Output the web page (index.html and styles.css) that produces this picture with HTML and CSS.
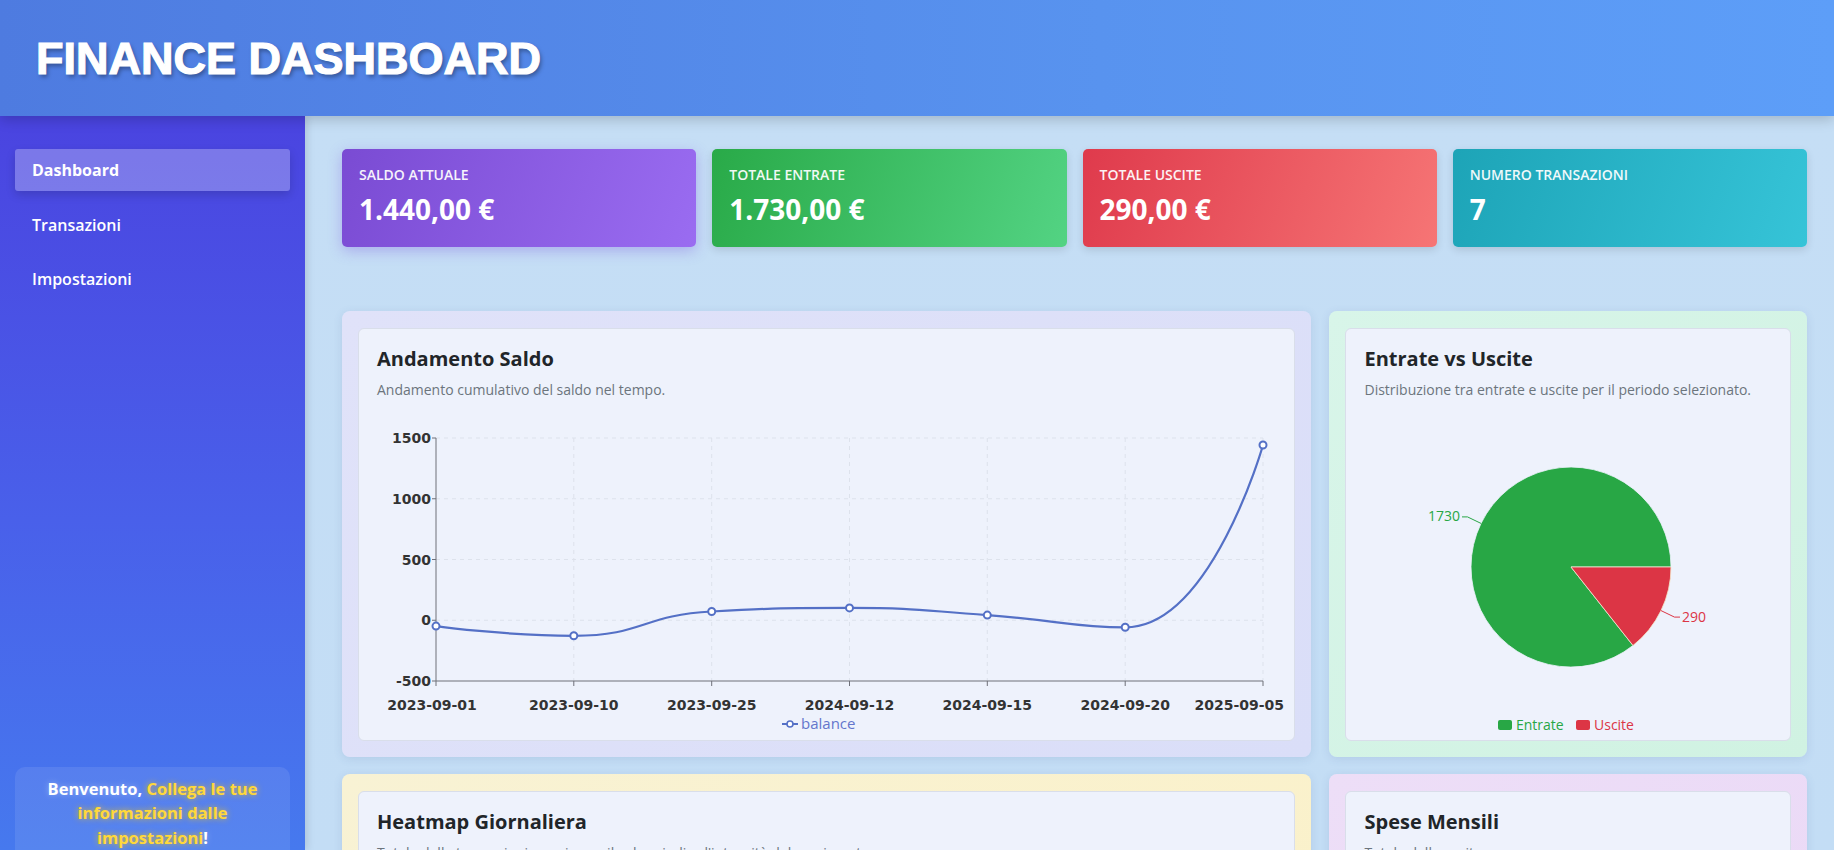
FILE: index.html
```
<!DOCTYPE html>
<html lang="it">
<head>
<meta charset="utf-8">
<title>Finance Dashboard</title>
<link rel="stylesheet" href="styles.css">
</head>
<body>
<header class="topbar">
  <h1 class="brand">FINANCE DASHBOARD</h1>
</header>
<div class="layout">
  <aside class="sidebar">
    <nav class="nav">
      <a class="nav-item active" href="#">Dashboard</a>
      <a class="nav-item" href="#">Transazioni</a>
      <a class="nav-item" href="#">Impostazioni</a>
    </nav>
    <div class="welcome">Benvenuto, <span class="hl">Collega le tue informazioni dalle impostazioni</span>!</div>
  </aside>
  <main class="main">
    <section class="stats">
      <div class="stat stat-purple">
        <div class="stat-label">Saldo attuale</div>
        <div class="stat-value">1.440,00 €</div>
      </div>
      <div class="stat stat-green">
        <div class="stat-label">Totale entrate</div>
        <div class="stat-value">1.730,00 €</div>
      </div>
      <div class="stat stat-red">
        <div class="stat-label">Totale uscite</div>
        <div class="stat-value">290,00 €</div>
      </div>
      <div class="stat stat-teal">
        <div class="stat-label">Numero transazioni</div>
        <div class="stat-value">7</div>
      </div>
    </section>

    <section class="charts">
      <div class="panel panel-lavender">
        <div class="chart-card">
          <h2 class="chart-title">Andamento Saldo</h2>
          <p class="chart-sub">Andamento cumulativo del saldo nel tempo.</p>
          <svg class="chart-svg" width="898" height="330" viewBox="0 0 898 330">
            <g class="grid">
              <line x1="59" y1="34" x2="886" y2="34"/>
              <line x1="59" y1="94.75" x2="886" y2="94.75"/>
              <line x1="59" y1="155.5" x2="886" y2="155.5"/>
              <line x1="59" y1="216.25" x2="886" y2="216.25"/>
              <line x1="196.8" y1="34" x2="196.8" y2="277"/>
              <line x1="334.7" y1="34" x2="334.7" y2="277"/>
              <line x1="472.5" y1="34" x2="472.5" y2="277"/>
              <line x1="610.3" y1="34" x2="610.3" y2="277"/>
              <line x1="748.2" y1="34" x2="748.2" y2="277"/>
              <line x1="886" y1="34" x2="886" y2="277"/>
            </g>
            <g class="axis">
              <line x1="59" y1="34" x2="59" y2="277"/>
              <line x1="59" y1="277" x2="886" y2="277"/>
              <line x1="55" y1="34" x2="59" y2="34"/>
              <line x1="55" y1="94.75" x2="59" y2="94.75"/>
              <line x1="55" y1="155.5" x2="59" y2="155.5"/>
              <line x1="55" y1="216.25" x2="59" y2="216.25"/>
              <line x1="55" y1="277" x2="59" y2="277"/>
              <line x1="59" y1="277" x2="59" y2="282"/>
              <line x1="196.8" y1="277" x2="196.8" y2="282"/>
              <line x1="334.7" y1="277" x2="334.7" y2="282"/>
              <line x1="472.5" y1="277" x2="472.5" y2="282"/>
              <line x1="610.3" y1="277" x2="610.3" y2="282"/>
              <line x1="748.2" y1="277" x2="748.2" y2="282"/>
              <line x1="886" y1="277" x2="886" y2="282"/>
            </g>
            <g class="axis-label y-labels">
              <text x="54" y="39">1500</text>
              <text x="54" y="100">1000</text>
              <text x="54" y="160.5">500</text>
              <text x="54" y="221">0</text>
              <text x="54" y="282">-500</text>
            </g>
            <g class="axis-label x-labels">
              <text x="55" y="306">2023-09-01</text>
              <text x="196.8" y="306">2023-09-10</text>
              <text x="334.7" y="306">2023-09-25</text>
              <text x="472.5" y="306">2024-09-12</text>
              <text x="610.3" y="306">2024-09-15</text>
              <text x="748.2" y="306">2024-09-20</text>
              <text class="x-last" x="907" y="306">2025-09-05</text>
            </g>
            <path class="series" d="M59,222.1 C59,222.1 128.3,231.8 196.8,231.8 C266.2,231.8 265.2,211.2 334.7,207.5 C403.1,203.9 403.7,203.9 472.5,203.9 C541.4,203.9 541.5,206.3 610.3,211.1 C679.3,216 696.2,223.3 748.2,223.3 C834.1,223.3 886,41 886,41"/>
            <g class="dots">
              <circle cx="59" cy="222.1" r="3.5"/>
              <circle cx="196.8" cy="231.8" r="3.5"/>
              <circle cx="334.7" cy="207.5" r="3.5"/>
              <circle cx="472.5" cy="203.9" r="3.5"/>
              <circle cx="610.3" cy="211.1" r="3.5"/>
              <circle cx="748.2" cy="223.3" r="3.5"/>
              <circle cx="886" cy="41" r="3.5"/>
            </g>
            <g class="legend">
              <line class="legend-line" x1="405" y1="320" x2="421" y2="320"/>
              <circle class="legend-dot" cx="413" cy="320" r="3"/>
              <text class="legend-text" x="424" y="325">balance</text>
            </g>
          </svg>
        </div>
      </div>

      <div class="panel panel-mint">
        <div class="chart-card">
          <h2 class="chart-title">Entrate vs Uscite</h2>
          <p class="chart-sub">Distribuzione tra entrate e uscite per il periodo selezionato.</p>
          <svg class="chart-svg" width="407" height="330" viewBox="0 0 407 330">
            <path class="slice-green" d="M207,163 L269,241.5 A100,100 0 1 1 307,163 Z"/>
            <path class="slice-red" d="M207,163 L307,163 A100,100 0 0 1 269,241.5 Z"/>
            <polyline class="leader-green" points="117,119.4 103.5,112.9 98,112.9"/>
            <text class="pie-label label-green" x="96" y="117" text-anchor="end">1730</text>
            <polyline class="leader-red" points="297,206.6 310.5,213.1 316,213.1"/>
            <text class="pie-label label-red" x="318" y="218">290</text>
            <rect class="sw-green" x="134" y="316" width="14" height="10" rx="2"/>
            <text class="pie-legend label-green" x="152" y="326">Entrate</text>
            <rect class="sw-red" x="212" y="316" width="14" height="10" rx="2"/>
            <text class="pie-legend label-red" x="230" y="326">Uscite</text>
          </svg>
        </div>
      </div>

      <div class="panel panel-yellow">
        <div class="chart-card">
          <h2 class="chart-title">Heatmap Giornaliera</h2>
          <p class="chart-sub">Totale delle transazioni per giorno: il colore indica l'intensità del movimento.</p>
        </div>
      </div>

      <div class="panel panel-pink">
        <div class="chart-card">
          <h2 class="chart-title">Spese Mensili</h2>
          <p class="chart-sub">Totale delle uscite per mese.</p>
        </div>
      </div>
    </section>
  </main>
</div>
</body>
</html>
```

FILE: styles.css
```
html, body {
  margin: 0;
  padding: 0;
  width: 1834px;
  height: 850px;
  overflow: hidden;
  font-family: "Open Sans", "Noto Sans", sans-serif;
}

.topbar {
  height: 116px;
  box-sizing: border-box;
  display: flex;
  align-items: center;
  padding-left: 36px;
  background: linear-gradient(90deg, #4e7be0 0%, #5893ef 60%, #5d9ef8 100%);
  box-shadow: 0 4px 12px rgba(0, 0, 0, 0.18);
  position: relative;
  z-index: 2;
}

.brand {
  margin: 0;
  font-family: "Liberation Sans", Arial, sans-serif;
  font-size: 45px;
  font-weight: 700;
  color: #ffffff;
  line-height: 1;
  -webkit-text-stroke: 1.2px #ffffff;
  text-shadow: 2px 3px 4px rgba(0, 0, 0, 0.35);
}

.layout {
  display: flex;
  height: 734px;
}

.sidebar {
  width: 305px;
  flex-shrink: 0;
  box-sizing: border-box;
  padding: 33px 15px 0;
  display: flex;
  flex-direction: column;
  background: linear-gradient(180deg, #4a44e0 0%, #4960ea 55%, #4679ee 100%);
  box-shadow: 2px 0 8px rgba(0, 0, 0, 0.12);
  position: relative;
  z-index: 1;
}

.nav {
  display: flex;
  flex-direction: column;
  gap: 12.5px;
}

.nav-item {
  height: 42px;
  display: flex;
  align-items: center;
  padding: 0 17px;
  color: #ffffff;
  font-size: 16px;
  font-weight: 600;
  text-decoration: none;
  border-radius: 3px;
}

.nav-item.active {
  background: rgba(255, 255, 255, 0.27);
  box-shadow: 0 4px 10px rgba(0, 0, 0, 0.15);
  font-weight: 700;
}

.welcome {
  margin-top: auto;
  margin-bottom: -10px;
  padding: 10px 16px;
  border-radius: 10px;
  background: rgba(255, 255, 255, 0.09);
  text-align: center;
  color: #ffffff;
  font-size: 16.5px;
  font-weight: 700;
  line-height: 24.5px;
  text-shadow: 0 0 6px rgba(255, 255, 255, 0.35);
}

.hl {
  color: #ffd83a;
  text-shadow: 0 0 6px rgba(255, 200, 0, 0.8);
}

.main {
  flex: 1;
  box-sizing: border-box;
  padding: 33px 27px 0 37px;
  background: linear-gradient(180deg, #c5def5 0%, #c3ddf5 100%);
  overflow: hidden;
}

.stats {
  display: grid;
  grid-template-columns: repeat(4, 1fr);
  gap: 16px;
  margin-bottom: 64px;
}

.stat {
  height: 98px;
  box-sizing: border-box;
  padding: 16px 17px;
  border-radius: 5px;
  color: #ffffff;
  box-shadow: 0 3px 8px rgba(0, 0, 0, 0.12);
}

.stat-purple { background: linear-gradient(110deg, #7a4bd3 0%, #9a6cf1 100%); box-shadow: 0 4px 14px rgba(120, 80, 220, 0.35); }
.stat-green { background: linear-gradient(110deg, #29aa48 0%, #53d383 100%); }
.stat-red { background: linear-gradient(110deg, #df3a4c 0%, #f67575 100%); }
.stat-teal { background: linear-gradient(110deg, #1da4b7 0%, #36c4d8 100%); }

.stat-label {
  font-size: 14px;
  font-weight: 600;
  line-height: 19px;
  text-transform: uppercase;
  opacity: 0.93;
}

.stat-value {
  margin-top: 7px;
  font-size: 28px;
  font-weight: 700;
  line-height: 36px;
}

.charts {
  display: grid;
  grid-template-columns: 67fr 33fr;
  gap: 17px 18px;
}

.panel {
  padding: 17px 16px 16px;
  border-radius: 8px;
  box-shadow: 0 2px 10px rgba(60, 80, 140, 0.12);
}

.panel-lavender { background: linear-gradient(135deg, #e0e2f9 0%, #dadef8 100%); }
.panel-mint { background: linear-gradient(135deg, #d8f5e9 0%, #d0f2e2 100%); }
.panel-yellow { background: linear-gradient(135deg, #f8f2d4 0%, #fbf1c8 100%); }
.panel-pink { background: linear-gradient(135deg, #eddef7 0%, #ead8f6 100%); }

.chart-card {
  height: 413px;
  box-sizing: border-box;
  padding: 16px 18px;
  background: #eef2fc;
  border: 1px solid #d9deea;
  border-radius: 6px;
  overflow: hidden;
}

.chart-title {
  margin: 0;
  font-size: 20px;
  font-weight: 700;
  line-height: 27px;
  color: #212529;
}

.chart-sub {
  margin: 8px 0 0;
  font-size: 14px;
  line-height: 19px;
  color: #6c757d;
}

.chart-svg {
  display: block;
  margin-top: 5px;
  overflow: visible;
}

.grid line {
  stroke: #dde2ec;
  stroke-width: 1;
  stroke-dasharray: 4 4;
}

.axis line {
  stroke: #6e7079;
  stroke-width: 1;
}

.axis-label {
  font-family: "DejaVu Sans", sans-serif;
  font-size: 14px;
  font-weight: 700;
  fill: #333333;
}

.y-labels { text-anchor: end; }
.x-labels { text-anchor: middle; }
.x-labels .x-last { text-anchor: end; }

.series {
  fill: none;
  stroke: #5470c6;
  stroke-width: 2.2;
}

.dots circle {
  fill: #ffffff;
  stroke: #5470c6;
  stroke-width: 2;
}

.legend-line {
  stroke: #5470c6;
  stroke-width: 2;
}

.legend-dot {
  fill: #ffffff;
  stroke: #5470c6;
  stroke-width: 1.6;
}

.legend-text {
  font-family: "Open Sans", sans-serif;
  font-size: 15px;
  fill: #6476cc;
}

.slice-green {
  fill: #28a745;
  stroke: #eef2fc;
  stroke-width: 0.8;
}

.slice-red {
  fill: #dc3545;
  stroke: #f4e6c8;
  stroke-width: 0.8;
}

.leader-green {
  fill: none;
  stroke: #28a745;
  stroke-width: 1;
}

.leader-red {
  fill: none;
  stroke: #dc3545;
  stroke-width: 1;
}

.pie-label,
.pie-legend {
  font-family: "Open Sans", sans-serif;
  font-size: 14px;
}

.label-green { fill: #28a745; }
.label-red { fill: #dc3545; }
.sw-green { fill: #28a745; }
.sw-red { fill: #dc3545; }
```
